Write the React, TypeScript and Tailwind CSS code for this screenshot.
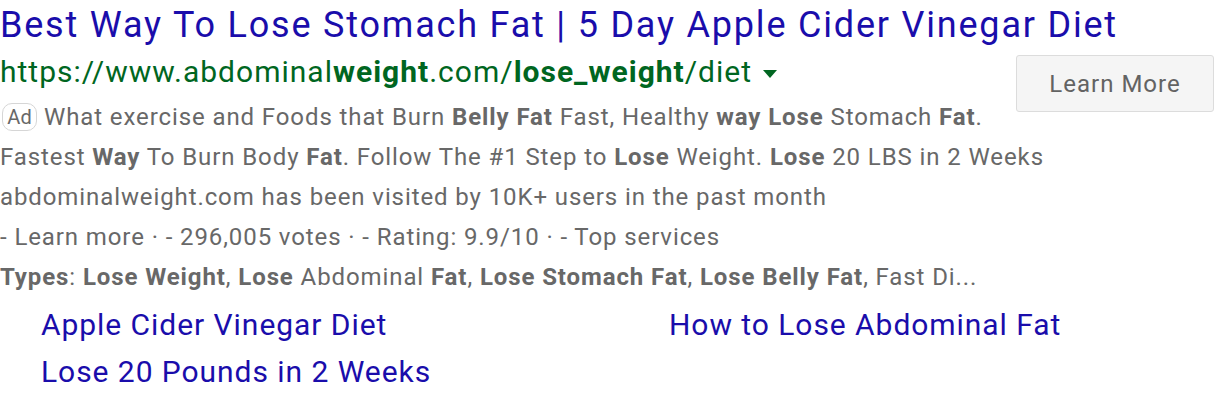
import React from "react";

const B = ({ children }: { children: React.ReactNode }) => (
  <span className="font-bold">{children}</span>
);

export default function App() {
  return (
    <div className="w-[1216px] h-[402px] bg-white overflow-hidden font-['Roboto',sans-serif]">
      <div className="text-[36px] leading-[50px] tracking-[1.8px] text-[#1a0dab] whitespace-nowrap">
        Best Way To Lose Stomach Fat | 5 Day Apple Cider Vinegar Diet
      </div>
      <div className="flex">
        <div className="flex-1 min-w-0">
          <div className="flex items-center text-[30px] leading-[44px] tracking-[1px] text-[#006621] whitespace-nowrap">
            <span>
              https://www.abdominal<B>weight</B>.com/<B>lose_weight</B>/diet
            </span>
            <span className="ml-[11px] mt-[4px] w-0 h-0 border-l-[7px] border-r-[7px] border-t-[8px] border-l-transparent border-r-transparent border-t-[#006621]" />
          </div>
          <div className="text-[24px] leading-[40px] tracking-[0.9px] text-[#686868] whitespace-nowrap mt-[3px]">
            <div className="flex items-center">
              <span className="inline-flex items-center justify-center h-[28px] w-[35px] mr-[7px] ml-[2px] rounded-[10px] border border-[#d6d6d6] text-[20px] tracking-normal leading-none text-[#686868]">
                Ad
              </span>
              <span>
                What exercise and Foods that Burn <B>Belly Fat</B> Fast, Healthy <B>way</B> <B>Lose</B> Stomach <B>Fat</B>.
              </span>
            </div>
            <div>
              Fastest <B>Way</B> To Burn Body <B>Fat</B>. Follow The #1 Step to <B>Lose</B> Weight. <B>Lose</B> 20 LBS in 2 Weeks
            </div>
            <div>abdominalweight.com has been visited by 10K+ users in the past month</div>
            <div>- Learn more · - 296,005 votes · - Rating: 9.9/10 · - Top services</div>
            <div>
              <B>Types</B>: <B>Lose Weight</B>, <B>Lose</B> Abdominal <B>Fat</B>, <B>Lose Stomach Fat</B>, <B>Lose Belly Fat</B>, Fast Di...
            </div>
          </div>
        </div>
        <div className="pt-[5px] pr-[2px]">
          <button className="w-[198px] h-[57px] bg-[#f5f5f5] border border-[#dcdcdc] rounded-[3px] text-[24px] tracking-[1px] text-[#636363]">
            Learn More
          </button>
        </div>
      </div>
      <div className="grid grid-cols-[628px_1fr] pl-[41px] text-[30px] leading-[47px] tracking-[0.95px] text-[#1a0dab] mt-[4px]">
        <div>Apple Cider Vinegar Diet</div>
        <div>How to Lose Abdominal Fat</div>
        <div>Lose 20 Pounds in 2 Weeks</div>
      </div>
    </div>
  );
}
